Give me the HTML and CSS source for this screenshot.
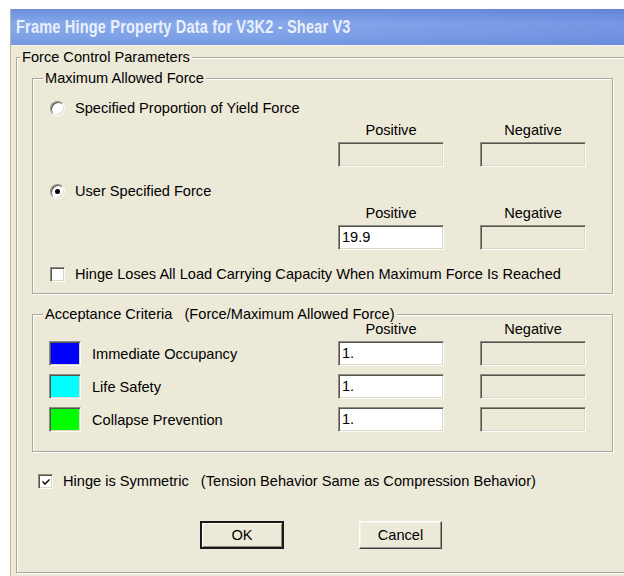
FILE: index.html
```html
<!DOCTYPE html>
<html lang="en">
<head>
<meta charset="utf-8">
<title>Frame Hinge Property Data</title>
<link rel="stylesheet" href="styles.css">
</head>
<body>
<div class="window">
  <div class="titlebar"><span class="title">Frame Hinge Property Data for V3K2 - Shear V3</span></div>
  <div class="client">
    <fieldset class="group outer">
      <legend class="legend-outer">Force Control Parameters</legend>

      <fieldset class="group inner max-force">
        <legend class="legend-inner">Maximum Allowed Force</legend>
        <div class="option first"><span class="radio"></span><span>Specified Proportion of Yield Force</span></div>
        <div class="pair head"><span>Positive</span><span>Negative</span></div>
        <div class="pair"><span class="field disabled"></span><span class="field disabled"></span></div>
        <div class="option spaced"><span class="radio checked"></span><span>User Specified Force</span></div>
        <div class="pair head"><span>Positive</span><span>Negative</span></div>
        <div class="pair"><span class="field">19.9</span><span class="field disabled"></span></div>
        <div class="option spaced"><span class="check"></span><span>Hinge Loses All Load Carrying Capacity When Maximum Force Is Reached</span></div>
      </fieldset>

      <fieldset class="group inner criteria">
        <legend class="legend-inner">Acceptance Criteria   (Force/Maximum Allowed Force)</legend>
        <div class="crit-row head"><span></span><span class="col">Positive</span><span class="col">Negative</span></div>
        <div class="crit-row">
          <span class="name"><span class="swatch io"></span>Immediate Occupancy</span>
          <span class="field">1.</span><span class="field disabled"></span>
        </div>
        <div class="crit-row">
          <span class="name"><span class="swatch ls"></span>Life Safety</span>
          <span class="field">1.</span><span class="field disabled"></span>
        </div>
        <div class="crit-row">
          <span class="name"><span class="swatch cp"></span>Collapse Prevention</span>
          <span class="field">1.</span><span class="field disabled"></span>
        </div>
      </fieldset>

      <div class="option symmetric">
        <span class="check"><svg viewBox="0 0 10 10" width="10" height="10"><path d="M1.5 4.5 L4 7 L8.5 2.5 L8.5 4.5 L4 9 L1.5 6.5 Z" fill="#000"/></svg></span>
        <span class="pre">Hinge is Symmetric   (Tension Behavior Same as Compression Behavior)</span>
      </div>

      <div class="buttons">
        <button class="btn default" type="button">OK</button>
        <button class="btn" type="button">Cancel</button>
      </div>
    </fieldset>
  </div>
</div>
</body>
</html>
```

FILE: styles.css
```css
* { box-sizing: border-box; }

html, body {
  margin: 0;
  padding: 0;
  background: #ffffff;
}

body {
  font-family: "Liberation Sans", Arial, sans-serif;
  font-size: 14.6px;
  color: #000;
}

/* dialog frame */
.window {
  margin: 9px 0 0 10px;
  width: 614px;
  height: 567px;
  overflow: hidden;
  background: #ece9d8;
  border-left: 1px solid #b9b6a6;
}

.titlebar {
  height: 36px;
  display: flex;
  align-items: center;
  padding-left: 5px;
  background:
    linear-gradient(to right, rgba(90, 120, 215, 0) 40%, rgba(90, 115, 215, 0.35) 100%),
    linear-gradient(to bottom, #6a8edc 0%, #86a9ea 40%, #7fa3e7 75%, #7498e0 100%);
}

.title {
  font-family: "Liberation Sans", Arial, sans-serif;
  font-weight: bold;
  font-size: 18px;
  color: #eaf0fc;
  white-space: nowrap;
  display: inline-block;
  transform: scaleX(0.81);
  transform-origin: left center;
  letter-spacing: 0.2px;
}

.client {
  padding: 3px 0 0 5px;
  border-top: 1px solid #f6f5ef;
}

/* etched group boxes */
.group {
  margin: 0;
  padding: 0;
  min-width: 0;
  border: 1px solid #aca899;
  box-shadow: inset 1px 1px 0 #fff, 1px 1px 0 #fff;
}

.group legend {
  background: #ece9d8;
  line-height: 16px;
  padding: 0 2px;
  white-space: pre;
}

.legend-outer { margin-left: 3px; }
.legend-inner { margin-left: 10px; }

.outer {
  width: 640px;
  padding-bottom: 23px;
}

.inner {
  width: 581px;
  margin-left: 15px;
}

.max-force {
  margin-top: 5px;
  padding-bottom: 9px;
}

.criteria {
  margin-top: 12px;
  padding-bottom: 19px;
}

/* radio / check rows */
.option {
  display: flex;
  align-items: center;
  height: 20px;
  padding-left: 17px;
  gap: 10px;
}

.option.first { margin-top: 12px; }
.option.spaced { margin-top: 14px; }

.radio {
  width: 15px;
  height: 15px;
  flex: none;
  border-radius: 50%;
  background: #fff;
  border: 1px solid;
  border-color: #8f8d83 #fbfbf8 #fbfbf8 #8f8d83;
  box-shadow: inset 1px 1px 0 #55544d, inset -1px -1px 0 #dcd9cb;
  display: flex;
  align-items: center;
  justify-content: center;
}

.radio.checked::after {
  content: "";
  width: 5px;
  height: 5px;
  border-radius: 50%;
  background: #000;
}

.check {
  width: 15px;
  height: 15px;
  flex: none;
  background: #fff;
  border: 1px solid;
  border-color: #8f8d83 #fbfbf8 #fbfbf8 #8f8d83;
  box-shadow: inset 1px 1px 0 #55544d, inset -1px -1px 0 #dcd9cb;
  display: flex;
  align-items: center;
  justify-content: center;
}

.pre { white-space: pre; }

/* positive / negative value pairs */
.pair {
  display: grid;
  grid-template-columns: 106px 106px;
  column-gap: 36px;
  justify-content: end;
  padding-right: 26px;
}

.pair.head {
  height: 24px;
  align-items: center;
  text-align: center;
}

.field {
  display: block;
  height: 25px;
  width: 106px;
  background: #fff;
  border: 1px solid;
  border-color: #8f8d83 #fbfbf8 #fbfbf8 #8f8d83;
  box-shadow: inset 1px 1px 0 #55544d, inset -1px -1px 0 #dcd9cb;
  padding: 0 3px;
  line-height: 23px;
}

.field.disabled { background: #ece9d8; }

/* acceptance criteria table */
.crit-row {
  display: grid;
  grid-template-columns: 1fr 106px 106px;
  column-gap: 36px;
  padding: 0 26px 0 16px;
  align-items: center;
  margin-top: 8px;
}

.crit-row.head {
  margin-top: 0;
  height: 14px;
  line-height: 14px;
  margin-bottom: -3px;
}

.crit-row.head .col { text-align: center; }

.name {
  display: flex;
  align-items: center;
  gap: 11px;
}

.swatch {
  width: 32px;
  height: 25px;
  flex: none;
  border: 1px solid;
  border-color: #8f8d83 #fbfbf8 #fbfbf8 #8f8d83;
  box-shadow: inset 1px 1px 0 #55544d, inset -1px -1px 0 #dcd9cb;
}

.swatch.io { background: #0000ff; }
.swatch.ls { background: #00ffff; }
.swatch.cp { background: #00ff00; }

.symmetric {
  margin-top: 19px;
  padding-left: 21px;
}

/* push buttons */
.buttons {
  display: flex;
  gap: 75px;
  margin-top: 30px;
  padding-left: 183px;
}

.btn {
  font-family: "Liberation Sans", Arial, sans-serif;
  font-size: 14.6px;
  color: #000;
  height: 28px;
  width: 83px;
  padding: 0;
  background: #ece9d8;
  border: 1px solid;
  border-color: #fff #404040 #404040 #fff;
  box-shadow: inset -1px -1px 0 #9c9a8f, inset 1px 1px 0 #f4f3ec;
}

.btn.default {
  width: 84px;
  border: 2px solid #000;
  border-color: #1a1a1a;
  box-shadow: inset 1px 1px 0 #fff, inset -1px -1px 0 #8a887e;
}
```
